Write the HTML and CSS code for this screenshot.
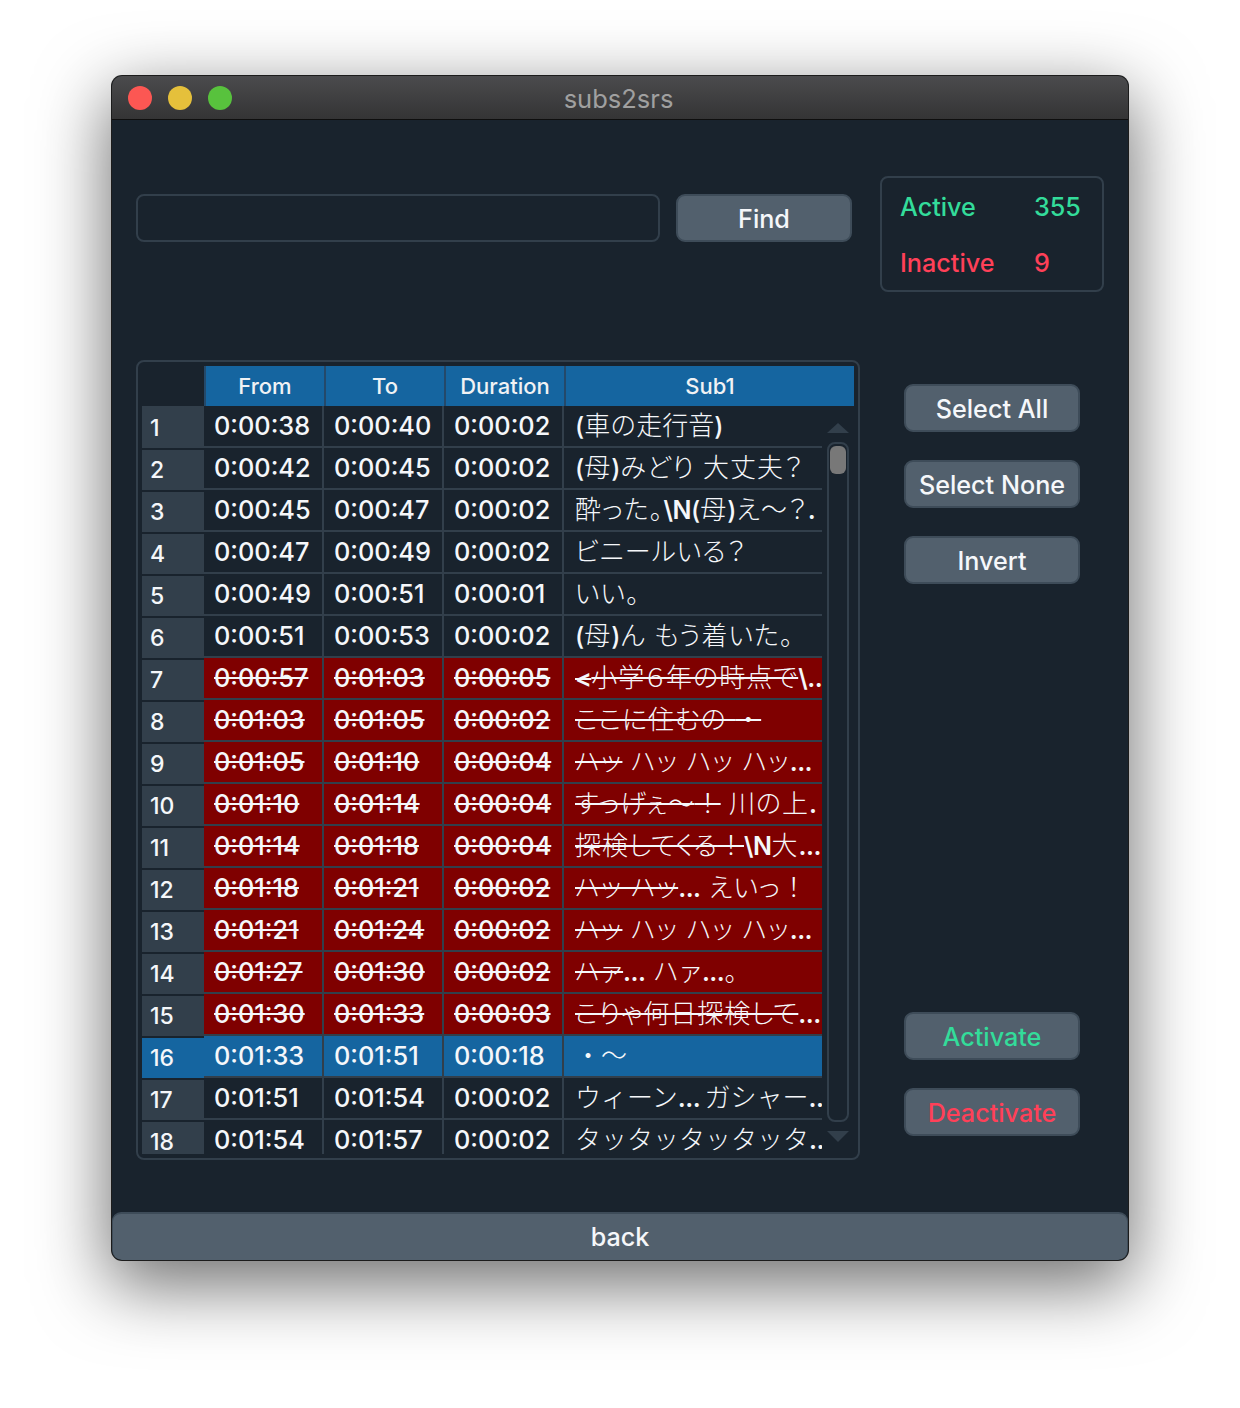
FILE: index.html
```html
<!DOCTYPE html>
<html lang="en">
<head>
    <meta charset="UTF-8">
    <title>subs2srs</title>
    <link rel="stylesheet" href="styles.css">
</head>
<body>
<div class="window">
    <div class="titlebar">
        <div class="lights"><i class="red"></i><i class="yellow"></i><i class="green"></i></div>
        <div class="title">subs2srs</div>
    </div>
    <div class="content">
        <div class="top">
            <div class="search">
                <input type="text" class="find-input">
                <button class="btn find-btn">Find</button>
            </div>
            <div class="stats">
                <span class="ok">Active</span><span class="ok">355</span>
                <span class="bad">Inactive</span><span class="bad">9</span>
            </div>
        </div>
        <div class="middle">
            <div class="frame">
                <div class="thead">
                    <span></span><span class="th">From</span><span class="th">To</span><span class="th">Duration</span><span class="th">Sub1</span>
                </div>
                <div class="tbody">
                    <div class="rows">
                        <div class="row"><span class="num">1</span><span class="td">0:00:38</span><span class="td">0:00:40</span><span class="td">0:00:02</span><span class="td sub"><em>(</em><span class="wide">車の走行音</span><em>)</em></span></div>
                        <div class="row"><span class="num">2</span><span class="td">0:00:42</span><span class="td">0:00:45</span><span class="td">0:00:02</span><span class="td sub"><em>(</em>母<em>)</em>みどり 大丈夫？</span></div>
                        <div class="row"><span class="num">3</span><span class="td">0:00:45</span><span class="td">0:00:47</span><span class="td">0:00:02</span><span class="td sub">酔った。<b>\N</b><em>(</em>母<em>)</em>え～？<b>.</b></span></div>
                        <div class="row"><span class="num">4</span><span class="td">0:00:47</span><span class="td">0:00:49</span><span class="td">0:00:02</span><span class="td sub">ビニールいる？</span></div>
                        <div class="row"><span class="num">5</span><span class="td">0:00:49</span><span class="td">0:00:51</span><span class="td">0:00:01</span><span class="td sub">いい。</span></div>
                        <div class="row"><span class="num">6</span><span class="td">0:00:51</span><span class="td">0:00:53</span><span class="td">0:00:02</span><span class="td sub"><em>(</em>母<em>)</em>ん もう着いた。</span></div>
                        <div class="row off"><span class="num">7</span><span class="td"><s>0:00:57</s></span><span class="td"><s>0:01:03</s></span><span class="td"><s>0:00:05</s></span><span class="td sub"><s><b>&lt;</b>小学６年の時点で</s><b>\..</b></span></div>
                        <div class="row off"><span class="num">8</span><span class="td"><s>0:01:03</s></span><span class="td"><s>0:01:05</s></span><span class="td"><s>0:00:02</s></span><span class="td sub"><s>ここに住むの <span class="wide">・</span></s></span></div>
                        <div class="row off"><span class="num">9</span><span class="td"><s>0:01:05</s></span><span class="td"><s>0:01:10</s></span><span class="td"><s>0:00:04</s></span><span class="td sub"><s>ハッ</s> ハッ ハッ ハッ<b>...</b></span></div>
                        <div class="row off"><span class="num">10</span><span class="td"><s>0:01:10</s></span><span class="td"><s>0:01:14</s></span><span class="td"><s>0:00:04</s></span><span class="td sub"><s>すっげぇ～<span class="wide">！</span></s> 川の上<b>.</b></span></div>
                        <div class="row off"><span class="num">11</span><span class="td"><s>0:01:14</s></span><span class="td"><s>0:01:18</s></span><span class="td"><s>0:00:04</s></span><span class="td sub"><s>探検してくる<span class="wide">！</span></s><b>\N</b>大<b>...</b></span></div>
                        <div class="row off"><span class="num">12</span><span class="td"><s>0:01:18</s></span><span class="td"><s>0:01:21</s></span><span class="td"><s>0:00:02</s></span><span class="td sub"><s>ハッ ハッ</s><b>...</b> えいっ<span class="wide">！</span></span></div>
                        <div class="row off"><span class="num">13</span><span class="td"><s>0:01:21</s></span><span class="td"><s>0:01:24</s></span><span class="td"><s>0:00:02</s></span><span class="td sub"><s>ハッ</s> ハッ ハッ ハッ<b>...</b></span></div>
                        <div class="row off"><span class="num">14</span><span class="td"><s>0:01:27</s></span><span class="td"><s>0:01:30</s></span><span class="td"><s>0:00:02</s></span><span class="td sub"><s>ハァ</s><b>...</b> ハァ<b>...</b>。</span></div>
                        <div class="row off"><span class="num">15</span><span class="td"><s>0:01:30</s></span><span class="td"><s>0:01:33</s></span><span class="td"><s>0:00:03</s></span><span class="td sub"><s>こりゃ何日探検して</s><b>...</b></span></div>
                        <div class="row on"><span class="num">16</span><span class="td">0:01:33</span><span class="td">0:01:51</span><span class="td">0:00:18</span><span class="td sub"><span class="wide">・～</span></span></div>
                        <div class="row"><span class="num">17</span><span class="td">0:01:51</span><span class="td">0:01:54</span><span class="td">0:00:02</span><span class="td sub tight"><span class="wide">ウィーン</span><b>...</b> <span class="wide">ガシャー</span><b>..</b></span></div>
                        <div class="row"><span class="num">18</span><span class="td">0:01:54</span><span class="td">0:01:57</span><span class="td">0:00:02</span><span class="td sub tight"><span class="wide">タッタッタッタッタ</span><b>..</b></span></div>
                    </div>
                    <div class="scroll">
                        <div class="arrow up"></div>
                        <div class="track"><div class="handle"></div></div>
                        <div class="arrow down"></div>
                    </div>
                </div>
            </div>
            <div class="side">
                <button class="btn">Select All</button>
                <button class="btn">Select None</button>
                <button class="btn">Invert</button>
                <button class="btn ok push">Activate</button>
                <button class="btn bad">Deactivate</button>
            </div>
        </div>
    </div>
    <button class="btn back">back</button>
</div>
</body>
</html>
```

FILE: styles.css
```css
*{
    margin:0;
    padding:0;
    box-sizing: border-box;
    outline: none;
}
html,body{
    height: 100%;
}
body{
    background: #fff;
    font-family: "Inter","Noto Sans CJK JP",sans-serif;
    font-weight: 450;
    overflow: hidden;
}
.window{
    width: 1016px;
    height: 1184px;
    margin: 76px 112px 0;
    display: flex;
    flex-direction: column;
    background: #19232d;
    border-radius: 10px;
    overflow: hidden;
    box-shadow: 0 0 0 1px #1c1c1c, 0 22px 70px 4px rgba(0,0,0,.56);
}
/* title bar */
.titlebar{
    height: 44px;
    flex: none;
    display: grid;
    grid-template-columns: 1fr auto 1fr;
    align-items: center;
    padding-left: 16px;
    background: linear-gradient(#4b4b4d,#343435);
    border-bottom: 1px solid #0e0e0e;
}
.lights{
    display: flex;
    gap: 16px;
}
.lights i{
    display: block;
    width: 24px;
    height: 24px;
    border-radius: 50%;
}
.lights .red{
    background: #fc5753;
}
.lights .yellow{
    background: #e5c03b;
}
.lights .green{
    background: #58c23d;
}
.title{
    color: #a0a0a0;
    font-size: 25.5px;
    font-weight: 400;
    margin-left: -19px;
    padding-top: 2px;
}
/* main */
.content{
    flex: 1;
    padding: 56px 24px 0;
}
.top{
    display: flex;
    align-items: flex-start;
}
.search{
    display: flex;
    gap: 16px;
    margin-top: 18px;
}
.find-input{
    width: 524px;
    height: 48px;
    background: transparent;
    border: 2px solid #323f4b;
    border-radius: 8px;
}
.btn{
    display: block;
    width: 176px;
    height: 48px;
    padding-top: 2px;
    background: #52606d;
    border: 2px solid #3e4c59;
    border-radius: 9px;
    color: #f5f7fa;
    font-family: inherit;
    font-size: 25.2px;
    font-weight: 450;
}
.stats{
    width: 224px;
    height: 116px;
    margin-left: 28px;
    padding: 1px 18px 0;
    display: grid;
    grid-template-columns: 134px auto;
    grid-auto-rows: 56px;
    align-items: center;
    border: 2px solid #323f4b;
    border-radius: 8px;
    font-size: 25.2px;
}
.ok{
    color: #33dc9a;
}
.bad{
    color: #ff4058;
}
.btn.ok{
    color: #33dc9a;
}
.btn.bad{
    color: #ff4058;
}
.middle{
    display: flex;
    margin-top: 68px;
}
/* table */
.frame{
    width: 724px;
    height: 800px;
    padding: 4px;
    border: 2px solid #323f4b;
    border-radius: 8px;
}
.thead{
    display: grid;
    grid-template-columns: 62px 120px 120px 120px 290px;
    height: 40px;
}
.th{
    background: #1565a0;
    border-left: 2px solid #24496a;
    color: #f0f2f4;
    font-size: 22px;
    line-height: 40px;
    text-align: center;
}
.tbody{
    display: flex;
    height: 748px;
    overflow: hidden;
}
.rows{
    width: 680px;
    flex: none;
}
.row{
    display: grid;
    grid-template-columns: 62px 120px 120px 120px 258px;
    height: 42px;
    color: #f5f7fa;
}
.num{
    margin-top: 2px;
    height: 40px;
    padding-left: 8px;
    background: #323f4b;
    font-size: 23px;
    line-height: 41px;
}
.row:first-child .num{
    margin-top: 0;
    height: 42px;
    padding-top: 2px;
}
.td{
    padding-left: 10px;
    border-right: 2px solid #323f4b;
    border-bottom: 2px solid #323f4b;
    font-size: 25.3px;
    line-height: 40px;
    white-space: nowrap;
    overflow: hidden;
}
.sub{
    padding-left: 11px;
    border-right: none;
    font-size: 26px;
    font-weight: 300;
    font-feature-settings: "palt";
    letter-spacing: 1px;
}
.sub b{
    font-weight: 600;
    font-size: 25px;
    letter-spacing: -.5px;
}
.sub em{
    font-style: normal;
    font-weight: 500;
    font-size: 25px;
    letter-spacing: 0;
}
.wide{
    font-feature-settings: normal;
    letter-spacing: 0;
}
.tight{
    word-spacing: -3px;
    letter-spacing: 0;
}
.row:last-child .td{
    border-bottom: none;
}
.off .td{
    background: #7f0000;
}
.on .td,.on .num{
    background: #1565a0;
}
/* scroll bar */
.scroll{
    flex: 1;
    display: flex;
    flex-direction: column;
    align-items: center;
    padding-top: 17px;
}
.arrow{
    width: 0;
    height: 0;
    border-left: 11px solid transparent;
    border-right: 11px solid transparent;
}
.arrow.up{
    border-bottom: 10px solid #323f4b;
}
.arrow.down{
    border-top: 11px solid #323f4b;
}
.track{
    width: 22px;
    height: 680px;
    margin: 9px 0;
    padding: 2px 1px;
    border: 2px solid #323f4b;
    border-radius: 8px;
}
.handle{
    width: 16px;
    height: 28px;
    background: #787878;
    border-radius: 6px;
}
/* side buttons */
.side{
    display: flex;
    flex-direction: column;
    gap: 28px;
    margin-left: 44px;
    padding: 24px 0;
}
.push{
    margin-top: auto;
}
.back{
    flex: none;
    width: 100%;
    height: 48px;
    padding-top: 0;
    border-width: 2px 1px 0;
}
```
